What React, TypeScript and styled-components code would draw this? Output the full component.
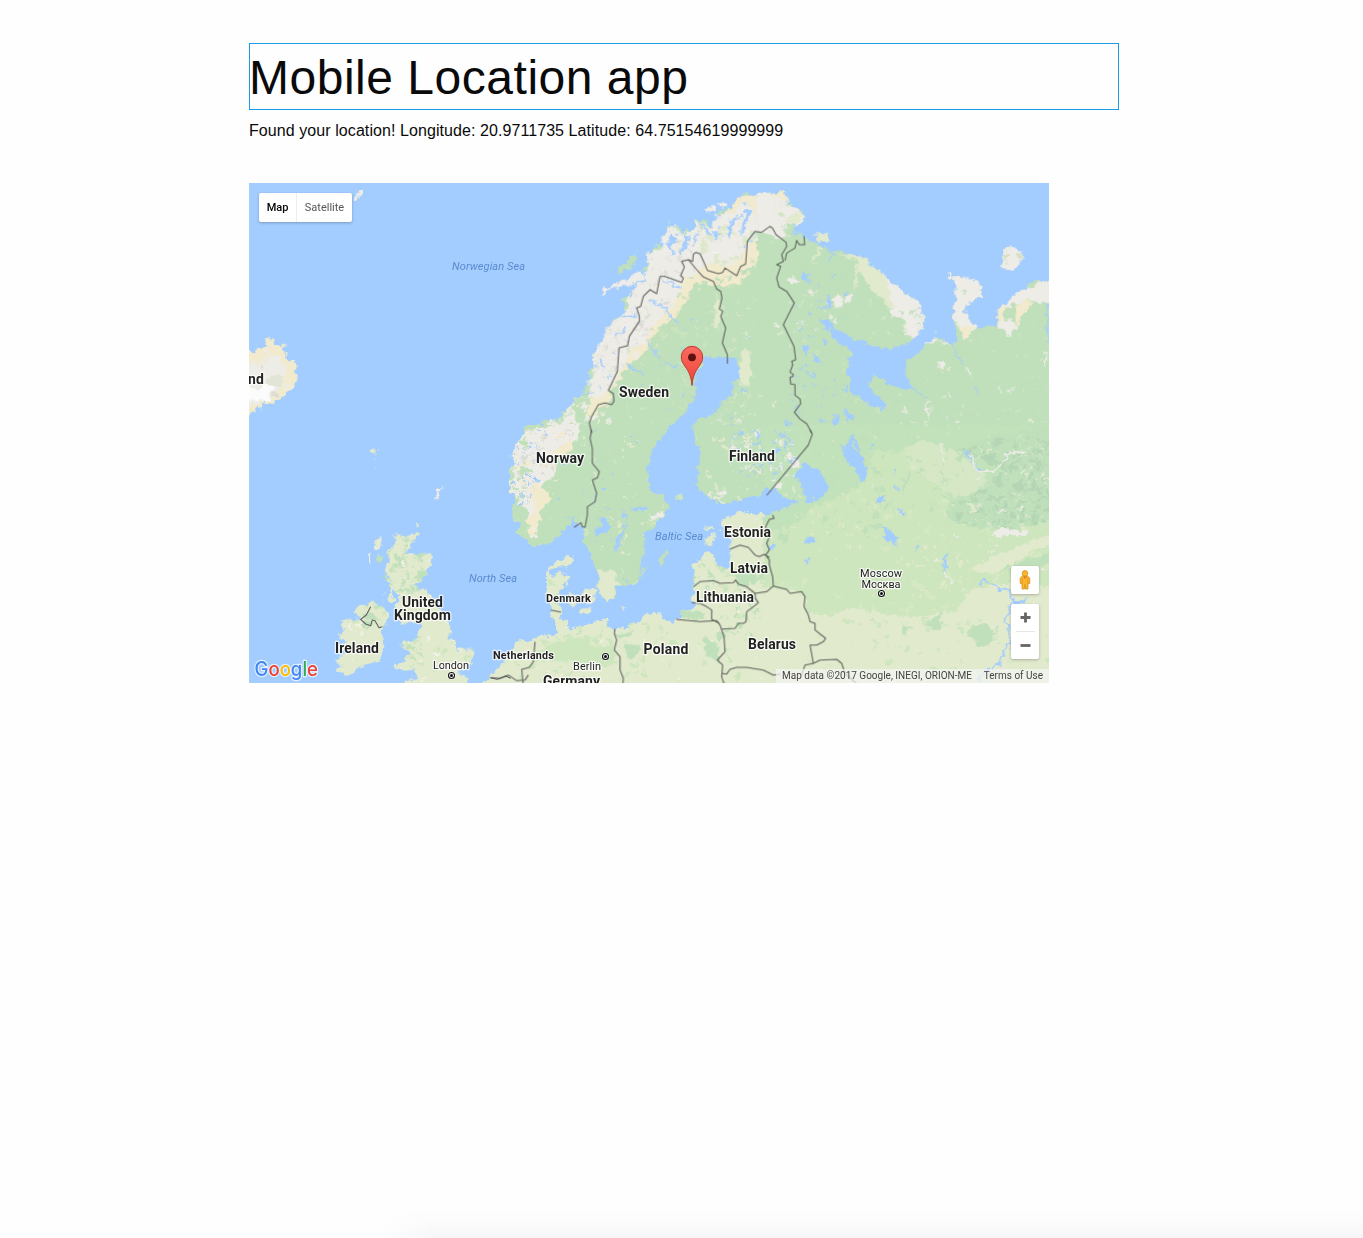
import React from "react";
import styled, { createGlobalStyle } from "styled-components";

const GlobalStyle = createGlobalStyle`
  *, *::before, *::after { box-sizing: border-box; }
  html, body { margin: 0; padding: 0; background: #fefefe; }
  body { font-family: "Liberation Sans", Arial, sans-serif; color: #0a0a0a; }
`;

const Page = styled.div`
  display: flex;
  flex-direction: column;
  height: 1238px;
  overflow: hidden;
`;
const Content = styled.main`
  flex: 1;
  display: flex;
  flex-direction: column;
  align-items: flex-start;
  width: 870px;
  margin-left: 249px;
  padding-top: 43px;
`;
const Title = styled.h1`
  width: 870px;
  height: 67px;
  margin: 0;
  border: 1px solid #1c9ce4;
  font-size: 48px;
  font-weight: 400;
  line-height: 67px;
  letter-spacing: 0.52px;
  text-indent: -1px;
`;
const Status = styled.p`
  margin: 8px 0 40px;
  font-size: 16px;
  line-height: 25px;
  letter-spacing: 0.075px;
  white-space: nowrap;
`;
const BottomShade = styled.div`
  flex: none;
  height: 28px;
  margin-left: 370px;
  background: linear-gradient(to bottom, rgba(0, 0, 0, 0), rgba(0, 0, 0, 0.012) 50%, rgba(0, 0, 0, 0.032));
  mask-image: linear-gradient(to right, transparent 10px, #000 64px);
`;
const MapFrame = styled.section`
  position: relative;
  width: 800px;
  height: 500px;
  overflow: hidden;
  background: #a3ccff;
  font-family: Roboto, sans-serif;
`;
const Layer = styled.svg`
  position: absolute;
  inset: 0;
  display: block;
  width: 800px;
  height: 500px;
`;
const Panel = styled.div`
  position: absolute;
  display: flex;
  background: #fff;
  border-radius: 2px;
  box-shadow: 0 1px 3px rgba(0, 0, 0, 0.25);
`;
const TypeSwitch = styled(Panel)`
  left: 10px;
  top: 10px;
  height: 29px;
`;
const TypeButton = styled.button<{ $active?: boolean }>`
  width: ${(p) => (p.$active ? 38 : 55)}px;
  padding: 0;
  border: 0;
  border-right: ${(p) => (p.$active ? "1px solid #ededed" : "0")};
  background: none;
  color: ${(p) => (p.$active ? "#000" : "#565656")};
  font: ${(p) => (p.$active ? 500 : 400)} 11px/29px Roboto, sans-serif;
`;
const PegmanBox = styled(Panel)`
  right: 10px;
  top: 383px;
  width: 28px;
  height: 28px;
  align-items: center;
  justify-content: center;
`;
const ZoomBox = styled(Panel)`
  right: 10px;
  top: 421px;
  width: 28px;
  height: 55px;
  flex-direction: column;
  align-items: center;
`;
const ZoomButton = styled.button`
  display: grid;
  place-items: center;
  width: 28px;
  height: 27px;
  padding: 0;
  border: 0;
  background: none;
`;
const Divider = styled.div`
  width: 19px;
  height: 1px;
  background: #e6e6e6;
`;
const Attribution = styled.div`
  position: absolute;
  right: 0;
  bottom: 0;
  display: flex;
  justify-content: space-between;
  width: 273px;
  height: 14px;
  padding: 0 6px;
  background: rgba(245, 245, 245, 0.7);
  color: #444;
  font-size: 10px;
  line-height: 14px;
  white-space: nowrap;
`;
const PlaceName = styled.text<{ $kind: Kind }>`
  font-family: Roboto, sans-serif;
  font-size: ${(p) => (p.$kind === "country" ? 14 : 11)}px;
  font-weight: ${(p) => (p.$kind === "country" || p.$kind === "small" ? 700 : 400)};
  font-style: ${(p) => (p.$kind === "sea" ? "italic" : "normal")};
  fill: ${(p) => (p.$kind === "sea" ? "#5a8bce" : "#222")};
  stroke: ${(p) => (p.$kind === "sea" ? "none" : "rgba(255,255,255,.75)")};
  stroke-width: 2.5px;
  stroke-linejoin: round;
  paint-order: stroke;
  text-anchor: middle;
`;
const Wordmark = styled.text`
  font-family: Inter, sans-serif;
  font-size: 20px;
  font-weight: 500;
  stroke: rgba(255, 255, 255, 0.7);
  stroke-width: 2.5px;
  stroke-linejoin: round;
  paint-order: stroke;
`;

type Kind = "country" | "small" | "city" | "sea";
const names: [string, number, number, number, Kind][] = [
  ["Norwegian Sea", 488.5, 270, 73, "sea"],
  ["North Sea", 493, 582, 48, "sea"],
  ["Baltic Sea", 679, 540, 48, "sea"],
  ["nd", 256, 384, 16, "country"],
  ["Sweden", 644, 397, 50, "country"],
  ["Norway", 560, 463, 48, "country"],
  ["Finland", 752, 461, 46, "country"],
  ["Estonia", 747.5, 537, 47, "country"],
  ["Latvia", 749, 573, 38, "country"],
  ["Lithuania", 725, 602, 58, "country"],
  ["Poland", 666, 654, 45, "country"],
  ["Belarus", 772, 649, 48, "country"],
  ["United", 422.5, 607, 41, "country"],
  ["Kingdom", 422.5, 620, 57, "country"],
  ["Ireland", 357, 653, 44, "country"],
  ["Germany", 571.5, 686, 57, "country"],
  ["Denmark", 568.5, 602, 45, "small"],
  ["Netherlands", 523.5, 659, 61, "small"],
  ["London", 451, 669, 36, "city"],
  ["Berlin", 587, 670, 28, "city"],
  ["Moscow", 881, 577, 42, "city"],
  ["Москва", 881, 588, 39, "city"],
];
const capitals = [[451.5, 675.5], [605.5, 656.5], [881.5, 593.5]];

const C = {
  water: "#a3ccff",
  green: "#c0e0bb",
  light: "#cde6be",
  pale: "#e1eacd",
  rock: "#eeece6",
  sand: "#f1eacd",
  deep: "#b5d6b5",
  grey: "#dcdbd5",
};

function scatterPath(seed: number, n: number, box: number[], size: number) {
  let s = (seed * 2654435761 + 17) >>> 0;
  const r = () => {
    s = (s + 0x6d2b79f5) >>> 0;
    let t = Math.imul(s ^ (s >>> 15), s | 1);
    t ^= t + Math.imul(t ^ (t >>> 7), t | 61);
    return ((t ^ (t >>> 14)) >>> 0) / 4294967296;
  };
  let d = "";
  for (let i = 0; i < n; i++) {
    const x = box[0] + r() * (box[2] - box[0]);
    const y = box[1] + r() * (box[3] - box[1]);
    const w = size * (0.4 + r() * r() * 1.6);
    const tilt = r() * 6.28;
    const k = 7;
    for (let j = 0; j < k; j++) {
      const a = (j / k) * 6.28;
      const q = w * (0.35 + r() * 0.9);
      const u = Math.cos(a) * q;
      const v = Math.sin(a) * q * 0.55;
      const px = x + u * Math.cos(tilt) - v * Math.sin(tilt);
      const py = y + u * Math.sin(tilt) + v * Math.cos(tilt);
      d += (j ? "L" : "M") + px.toFixed(1) + " " + py.toFixed(1);
    }
    d += "Z";
  }
  return d;
}

type Speck = [number, number[], number, string];
function Terrain({ id, d, fill, specks = [] }: { id: string; d: string; fill: string; specks?: Speck[] }) {
  return (
    <g>
      <clipPath id={id}><path d={d} /></clipPath>
      <path d={d} fill={fill} />
      <g clipPath={`url(#${id})`}>
        {specks.map(([n, box, size, color], i) => (
          <path key={i} d={scatterPath(id.charCodeAt(0) * 13 + id.charCodeAt(1) * 5 + i * 31 + n, n, box, size)} fill={color} />
        ))}
      </g>
    </g>
  );
}

const nordic =
  "M100 760L130 735 122 718 150 710 155 716 185 700 188 682 220 660 240 635 255 610 272 592 262 570 285 550 280 520 300 505 302 480 322 460 325 430 350 408 378 386 366 352 385 335 397 345 400 310 430 292 440 270 425 262 448 236 438 208 460 200 468 180 490 195 484 165 500 152 498 132 512 118 520 132 540 130 548 155 562 140 572 150 590 110 612 112 624 122 640 140 656 130 648 95 690 72 700 90 712 60 735 50 722 30 745 28 740 60 728 80 722 120 745 95 765 45 772 42 765 100 790 60 800 55 788 42 810 28 828 32 830 60 880 60 880 760Z";
const eastNorth =
  "M-40 30L0 30 20 40 5 80 20 90 30 55 50 60 60 78 75 68 95 85 108 105 85 125 60 130 30 125 50 140 80 150 100 160 130 175 160 190 180 200 208 208 214 202 240 214 270 220 310 250 350 285 400 325 445 357 452 380 460 402 456 440 430 470 400 490 360 500 320 492 260 470 220 450 195 440 175 412 160 410 165 430 200 470 235 500 242 520 230 560 240 590 243 628 280 645 305 672 335 682 346 675 345 650 310 630 295 600 310 575 330 585 350 604 380 605 400 620 427 610 405 570 408 540 440 510 470 490 490 463 520 475 552 490 566 452 545 402 560 330 550 290 527 270 560 282 610 283 630 310 640 345 600 355 582 385 605 415 620 435 680 428 685 370 710 365 720 345 750 325 780 305 850 285 850 760 -40 760Z";
const southNordic =
  "M80 -15L60 30 72 45 28 80 42 100 28 120 40 140 25 165 38 190 45 220 36 265 60 280 50 308 75 335 110 348 150 340 180 310 215 285 222 258 230 285 250 295 250 335 270 372 285 410 300 440 290 460 305 500 325 514 345 505 347 475 370 465 405 465 418 430 425 390 434 340 432 310 460 295 470 275 495 262 508 225 490 195 450 175 445 120 455 60 480 30 495 -15Z";
const finland =
  "M578 -15L585 40 600 80 592 110 590 170 610 190 640 210 650 222 680 222 740 205 800 190 860 170 860 -15Z";
const continent =
  "M860 228L800 240 780 252 740 245 700 252 665 270 662 292 690 312 692 350 690 412 670 415 648 395 630 367 600 385 580 410 578 470 582 520 575 540 545 542 542 560 520 575 490 565 480 546 440 552 410 578 350 600 325 590 318 562 308 572 270 580 240 590 215 602 200 590 205 570 180 560 185 530 178 500 188 465 210 450 215 440 182 432 215 402 218 375 190 385 150 405 138 430 140 500 155 530 160 565 175 605 150 618 130 612 100 630 50 630 35 660 15 690 -25 735 -60 770 860 770Z";
const britain =
  "M440 312L470 318 508 310 495 335 470 365 500 370 545 370 550 385 540 410 515 450 490 466 520 475 550 495 575 540 600 580 612 605 590 612 622 635 622 660 650 650 668 662 668 690 645 720 625 730 660 742 655 770 460 770 482 745 510 740 500 720 470 725 440 715 442 705 470 690 480 665 458 645 460 630 490 635 510 630 510 600 520 580 480 575 455 590 448 575 440 550 445 520 450 495 430 475 436 512 418 512 425 460 410 450 418 435 408 410 420 395 415 360 435 345Z";
const ireland =
  "M270 580L290 575 330 560 315 545 335 525 365 518 400 522 422 560 410 590 398 600 405 640 395 692 340 710 290 735 260 725 280 708 258 692 290 670 265 655 292 635 268 620 285 605Z";
const iceland =
  "M-20 500L20 505 30 490 50 498 48 462 70 463 74 480 90 495 108 475 98 500 112 505 112 525 148 545 140 560 150 580 130 610 115 635 95 645 60 665 40 660 40 675 20 678 -20 710Z";

const bordersNorth = [
  "M275 750L268 720 275 700 295 665 315 660 335 665 342 655 340 632 325 622 352 565 357 495 383 488 388 460 418 415 418 400 410 375 422 370 430 340 450 320 470 332 480 280 495 280 545 298 550 285 542 278 553 252 545 235 565 230 578 235 580 214 588 208 600 212 612 238 622 262 655 272 668 268 675 255 710 278 722 250 737 243 742 175 765 145 785 148 810 130 818 136 828 155 858 178 860 190 845 215 850 235 830 245 842 250 830 285 837 312 860 325 883 360 850 425 882 490 887 530 875 535 878 545 870 568 880 574 878 580 870 583 872 603 885 605 885 637 900 648 902 662 883 688 900 708 920 722 935 750",
  "M565 230L590 260 610 282 640 295 650 318 662 325 666 345 658 378 668 385 662 400 677 435 667 480 682 515 682 542",
  "M855 233L860 210 885 195 890 172 898 185 914 185 912 160",
];
const bordersSouth = [
  "M275 0L270 25 277 55 277 100 298 125 292 143 277 150 290 190 285 215 262 230 262 255 255 292 247 290 243 278 222 292",
  "M930 0L937 12 925 45 800 196",
  "M690 357L720 345 745 352 765 375 778 380 792 373 808 382",
  "M818 255L822 265 808 268 797 290 808 320 800 340 808 360 797 375 808 390 808 405 818 440 820 468 800 485 765 490",
  "M580 470L600 455 640 452 660 460 700 458 707 450 715 462 740 470 765 490 766 505 775 518 760 530 740 545 738 575 730 580 715 580 705 595 665 597",
  "M575 518L600 520 620 530 635 540 635 568 658 580",
  "M528 568L600 575 650 572 660 585 672 620 675 665 652 690 668 705 665 740 675 770",
  "M665 730L680 732 690 718 710 712 740 712 790 720 820 735 840 732",
  "M820 468L860 478 870 490 905 485 915 500 912 530 925 555 930 575 945 580 945 600 977 625 970 635 950 645 930 645 940 700 960 690 1010 688 1025 700 1035 730 1080 770",
  "M905 735L915 705 940 700",
  "M345 597L343 610 350 630 343 660 360 680 360 720 370 745 368 770",
  "M105 635L100 695 88 712 65 718 70 765",
  "M-30 743L0 745 25 735 50 752 75 750 85 735",
  "M153 540L183 546",
];

function Cartography() {
  return (
    <Layer viewBox="0 0 2400 1500">
      <defs>
        <filter id="coast" filterUnits="userSpaceOnUse" x="-60" y="-60" width="2520" height="1620" colorInterpolationFilters="sRGB">
          <feTurbulence type="fractalNoise" baseFrequency="0.05" numOctaves={3} seed={5} result="n" />
          <feDisplacementMap in="SourceGraphic" in2="n" scale={28} xChannelSelector="R" yChannelSelector="G" />
        </filter>
      </defs>
      <g filter="url(#coast)">
        <Terrain id="is" d={iceland} fill={C.sand} specks={[[30, [0, 500, 130, 640], 14, C.rock], [20, [0, 540, 100, 650], 13, C.grey]]} />
        <path fill={C.rock} d="M-10 540L40 560 70 510 90 520 110 560 105 600 60 650 10 670 -10 680Z" />
        <path fill="#e0e5d5" d="M45 600L70 575 105 580 95 610 60 615Z" />
        <path fill="#fbfbfb" d="M-10 600L20 620 45 605 75 610 70 630 50 655 10 655 -10 645Z" />
        <path fill={C.rock} d="M306 48L325 35 328 25 340 21 340 33 330 41 312 50Z" />
        <g transform="translate(753 0)">
          <Terrain id="no" d={nordic} fill={C.green} specks={[[260, [380, 300, 860, 740], 5, C.pale], [120, [100, 560, 330, 760], 11, C.rock], [30, [100, 600, 330, 760], 9, C.sand], [110, [400, 300, 860, 740], 8, C.light], [35, [420, 400, 840, 740], 6, C.water], [60, [590, 600, 860, 760], 6, C.rock]]} />
          <Terrain
            id="ny"
            d="M250 700L300 600 400 400 500 200 640 130 720 40 860 25 860 200 800 215 770 250 735 250 710 295 650 310 590 295 560 350 530 400 480 430 440 500 390 545 340 610 330 650 280 690Z"
            fill={C.sand}
            specks={[[100, [250, 200, 860, 730], 12, C.green], [90, [250, 180, 860, 700], 10, C.rock]]}
          />
          <Terrain
            id="nw"
            d="M262 640L285 550 280 520 302 480 325 430 378 386 385 335 397 345 400 310 430 292 448 236 438 208 490 195 484 165 512 118 548 155 572 150 590 110 640 140 648 95 700 90 735 50 765 100 810 28 860 55 860 140 780 165 730 220 690 250 620 240 590 270 550 290 530 350 500 390 460 430 430 480 390 500 365 560 330 620 290 650Z"
            fill={C.rock}
            specks={[[420, [260, 140, 640, 640], 7, C.grey], [45, [560, 90, 850, 260], 15, "#dce8ca"], [30, [270, 230, 480, 640], 9, "#d3e5c8"], [160, [270, 130, 850, 630], 5, "#f7f6f2"], [50, [440, 60, 780, 190], 8, C.water], [35, [260, 320, 420, 640], 6, C.water]]}
          />
          <path fill={C.rock} d="M300 340L305 320 340 308 355 292 380 290 425 262 432 282 400 305 360 310 320 325ZM610 75L640 65 650 80 625 90ZM655 65L675 55 680 68 662 78Z" />
          <path fill={C.green} d="M350 272L355 255 375 245 388 222 410 207 405 240 385 262 370 262Z" />
          <Terrain id="fs" d="M745 180L790 165 860 170 860 205 790 210 755 235ZM630 285L710 280 755 262 720 300 670 315Z" fill={C.sand} specks={[[16, [630, 170, 860, 310], 11, C.green]]} />
          <path fill={C.pale} d="M650 320L665 390 655 440 640 425 645 380ZM720 525L740 490 752 530 750 620 715 590 722 560Z" />
          <g fill={C.water}>
            <path d="M485 765L500 738 550 692 585 640 592 620 577 605 590 570 620 520 650 528 680 522 710 530 722 560 720 590 700 592 698 630 660 660 640 690 600 710 576 730 590 765ZM720 160L740 75 750 85 735 135 722 162ZM790 250L815 220 835 225 818 245ZM790 330L812 335 808 345 792 340Z" />
            <path d="M510 155L525 165 515 205 505 185ZM560 150L570 165 550 205 545 190ZM535 205L560 180 562 195 540 215ZM640 150L660 148 645 175ZM690 115L705 100 690 165 680 160Z" />
          </g>
          <g stroke={C.water} strokeWidth="5" fill="none">
            <path d="M490 290L540 312M445 352L505 380M495 385L535 420M440 475L475 515M380 545L430 575M490 540L530 550M230 640L280 625M345 455L380 440M365 405L415 395M470 520L485 535M500 180L520 210M590 150L580 190M600 120L635 155M770 315L785 325" />
          </g>
        </g>
        <g transform="translate(1563 0)">
          <Terrain id="ru" d={eastNorth} fill={C.green} specks={[[180, [-30, 170, 850, 760], 5, C.pale], [50, [-30, 400, 850, 760], 8, C.light], [60, [60, 240, 230, 760], 7, C.water], [40, [300, 600, 850, 760], 6, C.rock], [20, [0, 330, 200, 480], 7, C.rock]]} />
          <Terrain id="va" d="M-40 30L0 30 20 40 5 80 20 90 30 55 75 68 108 105 85 125 30 125 60 160 30 170 0 155 -40 145Z" fill={C.rock} specks={[[12, [0, 80, 100, 160], 9, C.light]]} />
          <path fill={C.rock} d="M50 290L70 282 85 295 72 305ZM115 320L135 325 137 335 118 335ZM185 345L215 338 225 370 195 375ZM225 340L245 335 240 360 228 355Z" />
          <path fill={C.pale} d="M205 210L270 220 310 250 355 285 385 325 385 370 350 375 345 350 305 325 285 285 265 265 268 235ZM40 110L80 88 100 100 75 125ZM135 150L170 155 178 175 145 175ZM120 235L150 190 158 195 130 230ZM255 270L262 240 268 255 252 330Z" />
          <Terrain id="kr" d="M350 285L400 325 445 357 460 402 456 440 430 470 410 455 400 435 405 410 370 400 358 385 375 370 360 345Z" fill={C.rock} specks={[[16, [390, 380, 455, 450], 8, C.green]]} />
          <path fill={C.rock} d="M527 270L560 282 610 283 630 310 640 345 600 355 582 385 605 415 620 435 600 445 570 432 545 402 560 330 550 290ZM683 430L685 370 710 365 720 345 750 325 780 305 850 285 850 365 780 352 730 365 720 405 740 430 720 465 700 440ZM465 485L490 463 510 480 545 490 530 482 500 475ZM500 530L527 530 525 560 505 555Z" />
          <path fill={C.sand} d="M565 430L610 430 605 455 580 465ZM740 365L775 350 785 360 750 405 735 430ZM680 380L710 370 705 410 685 415Z" />
          <path fill={C.green} d="M572 325L590 315 582 332ZM710 375L740 360 735 390 715 415 700 410ZM770 310L790 295 810 295 790 312Z" />
          <path fill={C.rock} d="M700 205L725 188 750 200 763 220 740 250 715 263 697 250ZM500 440L505 445 498 445Z" />
          <path fill="#d5dfc2" d="M705 215L718 205 712 240ZM742 220L760 215 750 235Z" />
          <g fill={C.water}>
            <path d="M95 265L125 270 110 280 115 295 98 290ZM125 505L150 525 155 545 135 535ZM97 485L115 490 112 515 98 505ZM150 410L165 440 180 430 160 405ZM185 710L210 700 212 730 190 725ZM225 675L245 695 255 710 228 715ZM170 335L182 330 180 375 172 372ZM40 705L65 725 50 725Z" />
            <path d="M245 580L260 575 255 600 245 600Z" />
          </g>
          <path d="M140 375L180 375M105 570L140 585M120 600L140 605M175 200L190 215 180 235M552 490L560 525 580 545M618 610L625 640M425 610L470 645M830 360L838 480" stroke={C.water} strokeWidth="4" fill="none" />
          <path d="M585 550L608 580M470 650L475 700M830 500L825 550" stroke={C.rock} strokeWidth="5" fill="none" />
        </g>
        <g transform="translate(0 741)">
          <Terrain id="gb" d={britain} fill={C.pale} specks={[[80, [410, 320, 530, 480], 10, C.green], [40, [430, 400, 660, 750], 9, C.light], [30, [440, 620, 520, 690], 8, C.green], [90, [410, 320, 660, 750], 6, "#f3f2ea"]]} />
          <Terrain id="ie" d={ireland} fill={C.pale} specks={[[12, [270, 520, 420, 720], 11, C.light], [26, [260, 520, 340, 730], 7, "#f3f2ea"], [12, [340, 520, 410, 590], 12, C.green]]} />
          <path fill={C.pale} d="M370 355L372 342 400 320 395 345ZM498 278L508 276 510 290 500 292ZM395 490L405 485 400 498ZM362 65L372 55 383 62 378 76ZM375 105L383 118 377 112Z" />
          <path fill={C.rock} d="M372 350L395 335 385 355 375 362ZM357 375L368 373 362 405ZM560 180L575 170 572 205 560 200 565 192ZM578 166L584 163 577 178ZM385 52L389 50 388 60ZM376 87L382 87 380 92Z" />
          <path fill={C.green} d="M382 385L395 372 402 390 390 400ZM398 440L412 432 410 450Z" />
        </g>
        <g transform="translate(753 741)">
          <Terrain id="sn" d={southNordic} fill={C.green} specks={[[130, [30, 0, 490, 480], 6, C.pale], [50, [160, 0, 480, 460], 5, C.water], [20, [150, 0, 460, 450], 10, C.light]]} />
          <Terrain id="nm" d="M60 30L80 0 175 -15 240 -15 235 30 185 60 165 130 130 165 110 320 90 325 80 240 50 210 25 165 40 100 28 80Z" fill={C.rock} specks={[[160, [30, 0, 230, 200], 8, C.grey], [50, [30, 0, 230, 230], 11, C.sand], [60, [30, 0, 80, 250], 10, C.green], [60, [25, 0, 140, 220], 6, C.water]]} />
          <Terrain id="ns" d="M185 40L215 30 210 70 165 90 155 80ZM95 210L110 150 125 175 155 205 125 240 110 315 85 310 80 270 100 240Z" fill={C.sand} specks={[[30, [80, 150, 120, 300], 7, C.rock]]} />
          <Terrain id="fi" d={finland} fill={C.green} specks={[[80, [580, 0, 850, 220], 7, C.pale], [60, [690, 0, 850, 130], 7, C.rock], [70, [690, 0, 850, 150], 6, C.water], [16, [630, 170, 680, 220], 9, C.rock]]} />
          <Terrain id="eu" d={continent} fill={C.pale} specks={[[180, [-20, 380, 850, 760], 11, C.light], [70, [580, 380, 850, 620], 11, C.green], [130, [-20, 250, 850, 760], 5, "#f3f2ea"], [25, [120, 580, 400, 760], 15, C.light]]} />
          <path fill={C.light} d="M150 640L240 620 290 650 340 640 350 700 270 710 180 690 100 695 110 670Z" />
          <path fill={C.green} d="M350 610L400 605 395 620 360 625ZM370 640L420 650 400 690 375 680ZM610 620L650 640 660 700 620 680ZM160 490L180 490 180 525 165 525ZM545 542L600 545 620 565 545 565ZM700 430L760 420 780 460 720 460Z" />
          <path fill={C.pale} d="M290 420L345 425 350 450 362 465 345 475 340 505 325 514 305 500 292 460 302 440ZM205 488L230 495 240 510 225 530 205 520ZM245 485L270 475 288 475 285 500 275 520 250 515ZM240 535L280 535 270 550 245 550ZM360 525L375 530 370 537 362 534ZM612 325L645 312 650 318 635 335 618 350ZM615 290L640 285 638 300 625 300Z" />
          <path fill={C.green} d="M478 400L480 380 500 360 502 380 485 415ZM418 455L425 420 440 395 435 420Z" />
          <path fill={C.rock} d="M450 255L490 250 495 260 465 268ZM35 75L55 70 65 90 35 92Z" />
          <path fill={C.light} d="M525 200L545 190 550 205 535 212Z" />
          <g fill={C.water}>
            <path d="M280 300L305 285 302 265 318 265 322 280 338 285 325 305 305 315 285 320ZM342 365L348 330 370 300 372 310 355 350ZM360 255L385 255 380 265 365 265ZM395 235L440 230 440 240 400 245ZM375 260L380 300 372 298ZM150 415L190 410 205 420 175 425 165 440 145 432Z" />
            <path d="M808 345L820 340 822 355 810 360Z" />
          </g>
        </g>
        <g transform="translate(1563 741)">
          <Terrain
            id="re"
            d="M-20 -15H850V770H-20Z"
            fill={C.light}
            specks={[[140, [0, 180, 850, 550], 14, "#d7e9c4"], [100, [0, 0, 400, 350], 13, C.green], [70, [350, 40, 650, 240], 12, C.pale]]}
          />
          <path fill={C.green} d="M-20 -15H850V240L780 270 720 290 650 300 590 290 530 260 540 200 480 150 500 90 400 60 340 70 300 140 230 190 130 230 60 290 0 300 -20 280Z" opacity=".85" />
          <path fill={C.light} d="M310 60L500 80 530 170 500 250 330 230 280 170Z" />
          <path fill="#d5e7c5" d="M460 30L570 70 650 140 620 190 550 200 480 150 420 110 400 60Z" />
          <path fill={C.pale} d="M600 420L680 375 850 310 850 345 790 360 720 410 650 430ZM-20 470L50 480 100 490 115 550 180 560 250 530 350 555 430 560 500 550 560 540 600 480 680 460 850 470 850 770 -20 770Z" />
          <Terrain id="rd" d="M560 60L650 20 850 -15 850 270 730 300 600 290 530 270 550 220 640 180 700 120Z" fill={C.green} specks={[[230, [520, 20, 850, 300], 15, C.deep], [90, [520, 20, 850, 300], 7, C.pale]]} />
          <Terrain id="rs" d="M-20 -15H850V770H-20Z" fill="none" specks={[[70, [110, 560, 850, 760], 11, C.light], [200, [0, 0, 850, 550], 6, C.pale], [50, [300, 20, 600, 240], 10, C.green], [70, [420, 20, 830, 550], 6, C.rock], [30, [0, 0, 75, 180], 10, C.rock], [30, [0, 0, 75, 140], 7, C.water], [24, [205, 20, 300, 120], 7, C.green], [40, [400, 350, 600, 500], 9, C.pale], [18, [600, 590, 690, 640], 13, C.green]]} />
          <path fill={C.green} d="M600 590L640 580 670 600 665 640 630 655 605 625ZM470 580L510 550 520 580 490 605ZM395 590L420 585 400 625ZM680 430L740 395 850 370 850 405 760 410Z" />
          <path fill={C.rock} d="M665 310L700 290 725 300 770 300 765 318 720 315 680 320Z" />
          <g fill={C.water}>
            <path d="M72 135L100 98 115 108 140 112 168 150 172 178 155 205 135 208 125 222 110 215 100 180 88 165 90 150 75 145ZM-20 178L15 172 40 200 80 213 75 225 40 230 5 250 -20 255Z" />
            <path d="M205 35L225 55 245 15 270 40 272 75 292 120 288 142 270 155 260 120 240 108 225 75ZM320 198L345 198 345 213 322 213ZM335 280L350 290 365 312 380 320 375 345 362 335 335 320 350 310ZM385 230L405 245 405 255 390 248ZM105 335L118 320 132 335 115 342ZM305 45L313 45 310 62ZM368 120L378 118 374 135ZM375 165L388 175 380 190ZM-5 340L10 345 8 358 -5 360ZM435 350L446 352 440 362ZM518 385L527 390 528 435 522 430Z" />
            <path d="M725 512L780 508 760 520 730 528Z" />
          </g>
          <path fill={C.green} d="M243 32L252 60 262 65 258 42Z" />
          <path d="M525 395L528 375M585 60L605 95 640 130M625 460L640 452 670 470 720 480 728 515 705 570 715 600 722 640 700 670 690 700 640 730 620 750M110 400L122 380" stroke={C.water} strokeWidth="6" fill="none" />
          <path d="M600 75L620 120 640 130 680 120 710 75 765 60M525 430L550 460" stroke={C.rock} strokeWidth="6" fill="none" />
        </g>
      </g>
      <g fill="none" stroke="#5d5f5c" strokeWidth="3.2" strokeLinejoin="round">
        <g transform="translate(753 0)">{bordersNorth.map((d) => <path key={d} d={d} />)}</g>
        <g transform="translate(753 741)">{bordersSouth.map((d) => <path key={d} d={d} />)}</g>
        <path transform="translate(0 741)" d="M365 530L352 555 335 568 350 582 365 587 370 570 378 572 390 593 400 590M725 743L745 748 770 738 785 745" />
      </g>
    </Layer>
  );
}

const googleLetters = [
  ["G", "#4285f4"], ["o", "#ea4335"], ["o", "#fbbc05"], ["g", "#4285f4"], ["l", "#34a853"], ["e", "#ea4335"],
];

function Labels() {
  return (
    <Layer viewBox="249 183 800 500">
      <defs>
        <linearGradient id="pin" x1="0" y1="0" x2="0" y2="1">
          <stop offset="0" stopColor="#fb6b61" />
          <stop offset="1" stopColor="#ee4336" />
        </linearGradient>
      </defs>
      {capitals.map(([x, y]) => (
        <g key={x}>
          <circle cx={x} cy={y} r="4.2" fill="#fff" opacity=".7" />
          <circle cx={x} cy={y} r="3" fill="#fff" stroke="#111" strokeWidth="1.1" />
          <circle cx={x} cy={y} r="1.5" fill="#111" />
        </g>
      ))}
      {names.map(([name, x, y, width, kind]) => (
        <PlaceName key={name} $kind={kind} x={x} y={y} textLength={width}>{name}</PlaceName>
      ))}
      <path d="M692 385.5C691 375 688.500 371.500 685.500 367C683 363.500 681.300 361 681.300 357A10.700 10.700 0 0 1 702.700 357C702.700 361 701 363.500 698.500 367C695.500 371.500 693 375 692 385.500Z" fill="url(#pin)" stroke="#b8322a" strokeWidth=".9" />
      <circle cx="692" cy="357.300" r="3.900" fill="#5c1210" />
      <Wordmark x="254.500" y="676" textLength="63.500" lengthAdjust="spacingAndGlyphs">
        {googleLetters.map(([letter, color], i) => <tspan key={i} fill={color}>{letter}</tspan>)}
      </Wordmark>
    </Layer>
  );
}

export default function App() {
  return (
    <>
      <GlobalStyle />
      <Page>
        <Content>
          <Title>Mobile Location app</Title>
          <Status>Found your location! Longitude: 20.9711735 Latitude: 64.75154619999999</Status>
          <MapFrame>
            <Cartography />
            <Labels />
            <TypeSwitch>
              <TypeButton $active>Map</TypeButton>
              <TypeButton>Satellite</TypeButton>
            </TypeSwitch>
            <PegmanBox>
              <svg width="12" height="20" viewBox="0 0 12 20">
                <path d="M3.500 6h5l2.300 2v5.500l-1.800.3V19H6.500L6 14.500 5.500 19H3v-5.200l-1.800-.3V8z" fill="#fbb52a" stroke="#cf8b1c" strokeWidth=".7" />
                <path d="M3.200 8.500v5M8.800 8.500v5" stroke="#cf8b1c" strokeWidth=".6" />
                <path d="M4 6.300h4L6 9z" fill="#e5762c" />
                <circle cx="6" cy="3.400" r="2.800" fill="#fbb52a" stroke="#cf8b1c" strokeWidth=".7" />
              </svg>
            </PegmanBox>
            <ZoomBox>
              <ZoomButton aria-label="Zoom in">
                <svg width="11" height="11" viewBox="0 0 11 11"><path d="M5.500 .5v10M.5 5.500h10" stroke="#666" strokeWidth="2.800" /></svg>
              </ZoomButton>
              <Divider />
              <ZoomButton aria-label="Zoom out">
                <svg width="11" height="11" viewBox="0 0 11 11"><path d="M.5 5.500h10" stroke="#666" strokeWidth="2.800" /></svg>
              </ZoomButton>
            </ZoomBox>
            <Attribution>
              <span>Map data ©2017 Google, INEGI, ORION-ME</span>
              <span>Terms of Use</span>
            </Attribution>
          </MapFrame>
        </Content>
        <BottomShade />
      </Page>
    </>
  );
}
